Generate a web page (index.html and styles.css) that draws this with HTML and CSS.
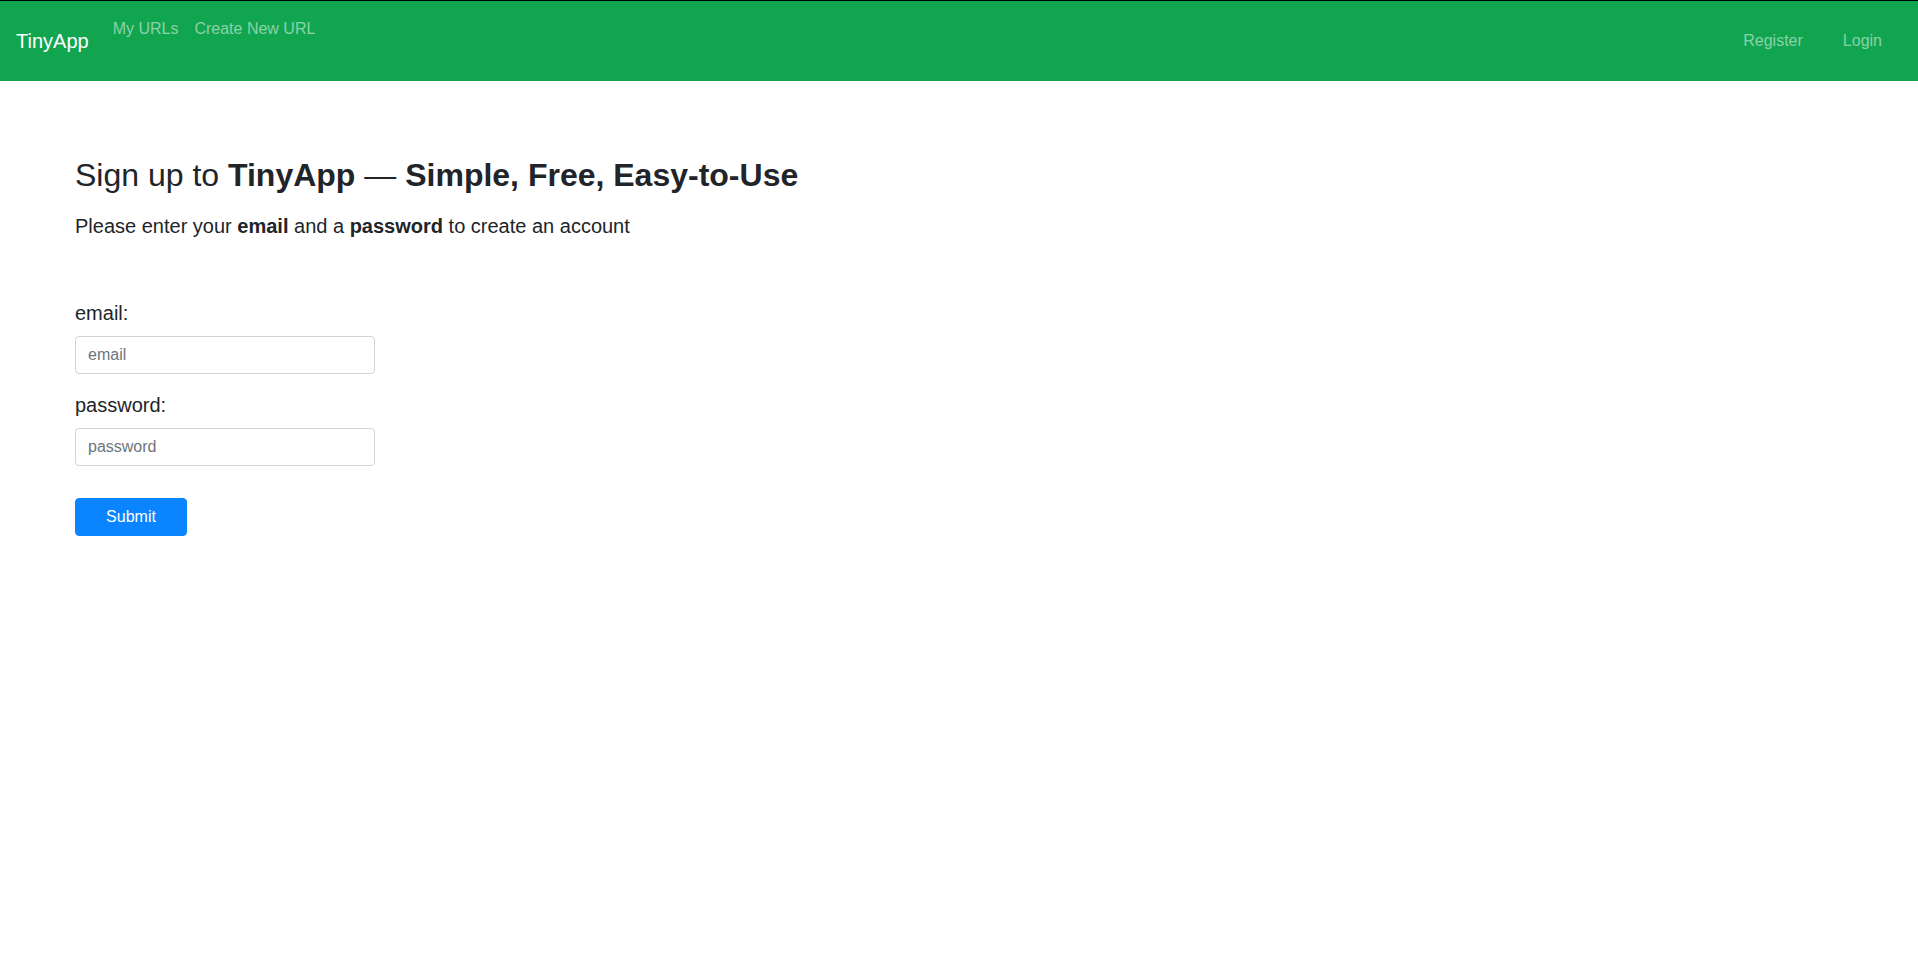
FILE: index.html
```html
<!DOCTYPE html>
<html lang="en">
<head>
<meta charset="utf-8">
<title>TinyApp - Register</title>
<link rel="stylesheet" href="styles.css">
</head>
<body>
  <nav class="navbar">
    <a class="brand" href="#">TinyApp</a>
    <ul class="nav nav-left">
      <li><a class="nav-link" href="#">My URLs</a></li>
      <li><a class="nav-link" href="#">Create New URL</a></li>
    </ul>
    <ul class="nav nav-right">
      <li><a class="nav-link" href="#">Register</a></li>
      <li><a class="nav-link" href="#">Login</a></li>
    </ul>
  </nav>
  <main class="main">
    <h2 class="title">Sign up to <b>TinyApp</b> — <b>Simple, Free, Easy-to-Use</b></h2>
    <p class="lead">Please enter your <b>email</b> and a <b>password</b> to create an account</p>
    <form class="form">
      <div class="form-group">
        <label class="label" for="email">email:</label>
        <input class="form-control" id="email" type="text" placeholder="email">
      </div>
      <div class="form-group">
        <label class="label" for="password">password:</label>
        <input class="form-control" id="password" type="password" placeholder="password">
      </div>
      <button class="btn" type="button">Submit</button>
    </form>
  </main>
</body>
</html>
```
FILE: styles.css
```css
* {
  box-sizing: border-box;
}

html, body {
  margin: 0;
  padding: 0;
  background: #fff;
}

body {
  font-family: "Liberation Sans", Arial, sans-serif;
  font-size: 16px;
  line-height: 1.5;
  color: #212529;
}

.navbar {
  display: flex;
  align-items: flex-start;
  height: 81px;
  border-top: 1px solid #000;
  background: #12a550;
  padding: 0 16px;
}

.brand {
  font-size: 20px;
  line-height: 30px;
  color: #fff;
  text-decoration: none;
  margin-top: 25px;
  margin-right: 16px;
}

.nav {
  list-style: none;
  margin: 0;
  padding: 0;
  display: flex;
}

.nav-link {
  display: block;
  color: rgba(255, 255, 255, 0.5);
  text-decoration: none;
  font-size: 16px;
  line-height: 24px;
}

.nav-left {
  margin-top: 16px;
}

.nav-left .nav-link {
  padding: 0 8px;
}

.nav-right {
  margin-left: auto;
  margin-top: 28px;
}

.nav-right .nav-link {
  padding: 0 20px;
}

.main {
  padding: 75px 75px 0;
}

.title {
  margin: 0;
  font-size: 32px;
  line-height: 38.4px;
  font-weight: 400;
}

.title b {
  font-weight: 700;
}

.lead {
  margin: 17px 0 0;
  font-size: 20px;
  line-height: 30px;
  font-weight: 400;
}

.form {
  margin-top: 57px;
}

.form-group {
  margin-bottom: 16px;
}

.label {
  display: block;
  font-size: 20px;
  line-height: 30px;
  margin-bottom: 8px;
}

.form-control {
  display: block;
  width: 300px;
  height: 38px;
  padding: 6px 12px;
  font-family: inherit;
  font-size: 16px;
  line-height: 24px;
  color: #495057;
  background: #fff;
  border: 1px solid #ced4da;
  border-radius: 4px;
  outline: none;
}

.form-control::placeholder {
  color: #6c757d;
  opacity: 1;
}

.btn {
  display: block;
  margin-top: 32px;
  width: 112px;
  height: 38px;
  padding: 6px 12px;
  font-family: inherit;
  font-size: 16px;
  line-height: 24px;
  color: #fff;
  background: #0a84ff;
  border: 1px solid #0a84ff;
  border-radius: 4px;
  cursor: pointer;
}
```
